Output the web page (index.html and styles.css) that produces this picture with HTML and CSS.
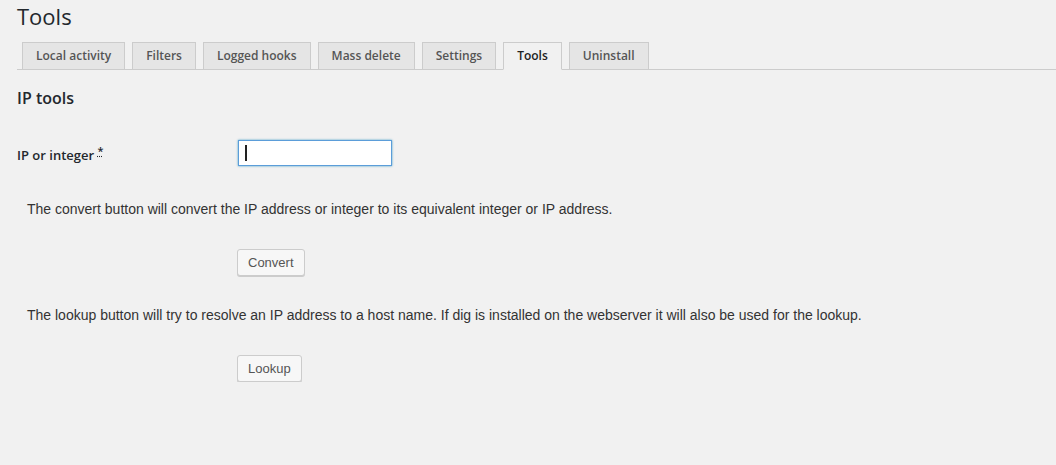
FILE: index.html
```html
<!DOCTYPE html>
<html>
<head>
<meta charset="utf-8">
<link rel="stylesheet" href="styles.css">
</head>
<body>
<div class="wrap">
  <h1 class="title">Tools</h1>
  <nav class="tabs">
    <a class="tab">Local activity</a>
    <a class="tab">Filters</a>
    <a class="tab">Logged hooks</a>
    <a class="tab">Mass delete</a>
    <a class="tab">Settings</a>
    <a class="tab active">Tools</a>
    <a class="tab">Uninstall</a>
  </nav>
  <h2 class="section">IP tools</h2>
  <div class="field">
    <label class="label">IP or integer <abbr class="req">*</abbr></label>
    <div class="input"><span class="caret"></span></div>
  </div>
  <p class="desc">The convert button will convert the IP address or integer to its equivalent integer or IP address.</p>
  <div class="btnrow"><button class="btn">Convert</button></div>
  <p class="desc desc-next">The lookup button will try to resolve an IP address to a host name. If dig is installed on the webserver it will also be used for the lookup.</p>
  <div class="btnrow"><button class="btn">Lookup</button></div>
</div>
</body>
</html>
```
FILE: styles.css
```css
html, body {
  margin: 0;
  padding: 0;
  background: #f1f1f1;
}
body {
  font-family: "Open Sans", sans-serif;
  color: #23282d;
}
.wrap {
  padding: 0 0 0 17px;
}
.title {
  margin: 0;
  padding-top: 0;
  font-size: 22px;
  font-weight: 400;
  line-height: 32px;
  height: 42px;
}
.tabs {
  display: flex;
  gap: 7px;
  padding-left: 5px;
  border-bottom: 1px solid #cccccc;
  height: 27px;
}
.tab {
  box-sizing: border-box;
  height: 28px;
  padding: 0 13px;
  border: 1px solid #cccccc;
  background: #e5e5e5;
  color: #555555;
  font-size: 12px;
  font-weight: 600;
  line-height: 26px;
}
.tab.active {
  background: #f1f1f1;
  border-bottom-color: #f1f1f1;
  color: #222222;
}
.section {
  margin: 0;
  padding-top: 18px;
  font-size: 16px;
  font-weight: 600;
  line-height: 20px;
  height: 36px;
}
.field {
  display: flex;
  align-items: center;
  height: 26px;
  margin-top: 16px;
}
.label {
  width: 221px;
  font-size: 13px;
  font-weight: 600;
  line-height: 20px;
}
.req {
  text-decoration: underline dotted;
  font-size: 11px;
  vertical-align: 5px;
}
.input {
  box-sizing: border-box;
  width: 154px;
  height: 26px;
  background: #ffffff;
  border: 1px solid #5b9dd9;
  box-shadow: 0 0 2px rgba(30, 140, 190, 0.8);
  display: flex;
  align-items: center;
  padding-left: 6px;
}
.caret {
  width: 2px;
  height: 16px;
  background: #222222;
}
.desc {
  margin: 0;
  padding: 34px 0 0 10px;
  height: 49px;
  font-family: "Liberation Sans", sans-serif;
  font-size: 14px;
  line-height: 18px;
  color: #333333;
}
.desc-next {
  padding-top: 30px;
}
.btnrow {
  padding-left: 220px;
  height: 27px;
}
.btn {
  box-sizing: border-box;
  height: 27px;
  padding: 0 10px;
  border: 1px solid #cccccc;
  border-radius: 3px;
  background: #f7f7f7;
  box-shadow: 0 1px 0 #cccccc;
  font-family: "Liberation Sans", sans-serif;
  font-size: 13px;
  color: #555555;
}
```
